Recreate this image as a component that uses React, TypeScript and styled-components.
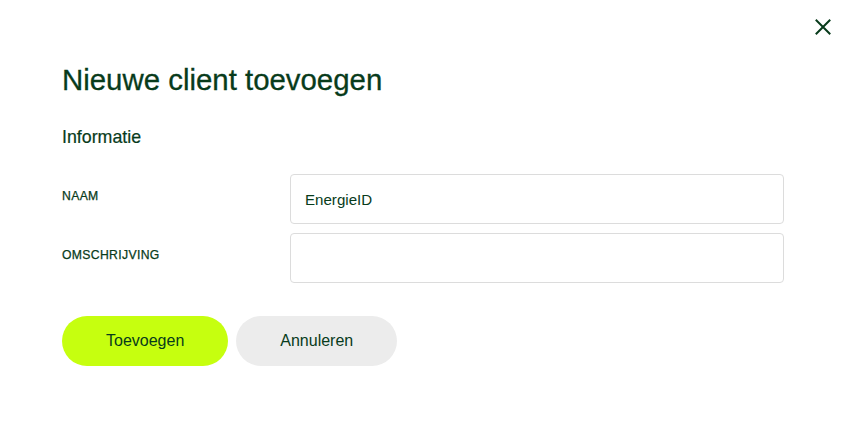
import React from "react";
import styled, { createGlobalStyle } from "styled-components";

const GlobalStyle = createGlobalStyle`
  html, body { margin: 0; padding: 0; background: #ffffff; }
  body { font-family: "Liberation Sans", Arial, sans-serif; color: #083b1b; }
  * { box-sizing: border-box; }
`;

const Dialog = styled.div`
  position: relative;
  width: 845px;
  height: 427px;
  padding: 63px 62px 0 62px;
  background: #ffffff;
`;

const CloseButton = styled.button`
  position: absolute;
  top: 17px;
  right: 12px;
  width: 20px;
  height: 20px;
  padding: 0;
  border: none;
  background: transparent;
  display: flex;
  align-items: center;
  justify-content: center;
  cursor: pointer;
`;

const Title = styled.h1`
  margin: 0;
  font-size: 29.4px;
  line-height: 34px;
  font-weight: 400;
  color: #083b1b;
  -webkit-text-stroke: 0.3px #083b1b;
`;

const SectionTitle = styled.h2`
  margin: 30px 0 0 0;
  font-size: 17.8px;
  line-height: 20px;
  font-weight: 400;
  color: #083b1b;
  -webkit-text-stroke: 0.2px #083b1b;
`;

const FormGrid = styled.div`
  margin-top: 27px;
  display: grid;
  grid-template-columns: 228px 494px;
  row-gap: 9px;
  align-items: start;
`;

const Label = styled.label`
  padding-top: 15px;
  font-size: 12.2px;
  line-height: 14px;
  letter-spacing: 0.35px;
  text-transform: uppercase;
  color: #083b1b;
  -webkit-text-stroke: 0.25px #083b1b;
`;

const Input = styled.input`
  width: 100%;
  height: 50px;
  padding: 0 14px;
  border: 1px solid #dcdcdc;
  border-radius: 4px;
  font-family: "Liberation Sans", Arial, sans-serif;
  font-size: 15.1px;
  color: #083b1b;
  background: #ffffff;
  outline: none;
`;

const Actions = styled.div`
  margin-top: 33px;
  display: flex;
  gap: 8px;
`;

const Button = styled.button<{ $variant: "primary" | "secondary" }>`
  height: 50px;
  padding: 0 44px;
  border: none;
  border-radius: 25px;
  font-family: "Liberation Sans", Arial, sans-serif;
  font-size: 16px;
  color: #083b1b;
  background: ${(p) => (p.$variant === "primary" ? "#c6ff0f" : "#ececec")};
  cursor: pointer;
`;

export default function App() {
  return (
    <>
      <GlobalStyle />
      <Dialog>
        <CloseButton aria-label="Sluiten">
          <svg width="16" height="16" viewBox="0 0 16 16" fill="none">
            <path d="M1.5 1.5L14.5 14.5M14.5 1.5L1.5 14.5" stroke="#083b1b" strokeWidth="2" strokeLinecap="square" />
          </svg>
        </CloseButton>
        <Title>Nieuwe client toevoegen</Title>
        <SectionTitle>Informatie</SectionTitle>
        <FormGrid>
          <Label htmlFor="naam">Naam</Label>
          <Input id="naam" defaultValue="EnergieID" />
          <Label htmlFor="omschrijving">Omschrijving</Label>
          <Input id="omschrijving" defaultValue="" />
        </FormGrid>
        <Actions>
          <Button $variant="primary">Toevoegen</Button>
          <Button $variant="secondary">Annuleren</Button>
        </Actions>
      </Dialog>
    </>
  );
}
